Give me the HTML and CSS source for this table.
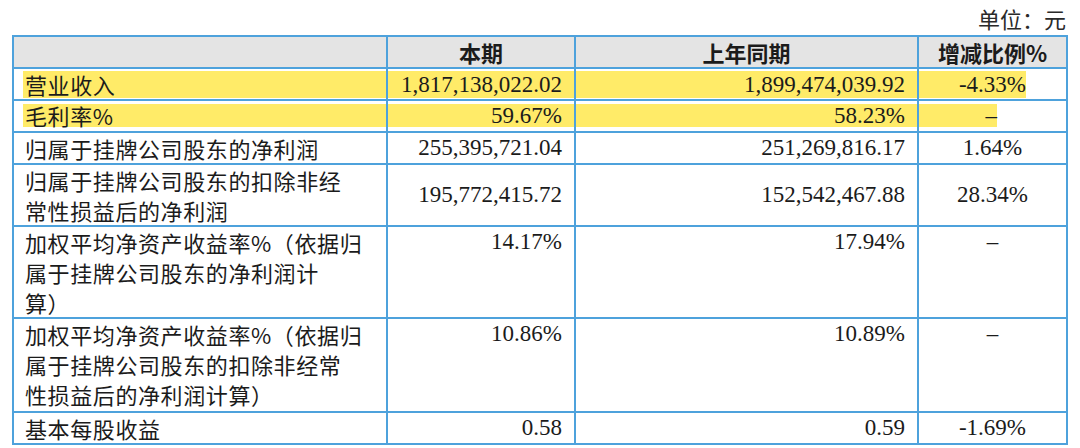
FILE: index.html
```html
<!DOCTYPE html>
<html lang="zh-CN">
<head>
<meta charset="utf-8">
<title>主要会计数据</title>
<link rel="stylesheet" href="styles.css">
</head>
<body>
<div class="unit">单位：元</div>
<table class="fin">
  <thead>
    <tr>
      <th class="c1"></th>
      <th class="c2">本期</th>
      <th class="c3">上年同期</th>
      <th class="c4">增减比例%</th>
    </tr>
  </thead>
  <tbody>
    <tr class="hl-row hl-a">
      <td class="name hl-name"><div class="hl">营业收入</div></td>
      <td class="num hl-num"><div class="hl">1,817,138,022.02</div></td>
      <td class="num hl-num"><div class="hl">1,899,474,039.92</div></td>
      <td class="pct hl-pct"><div class="hl w-a">-4.33%</div></td>
    </tr>
    <tr class="hl-row hl-b">
      <td class="name hl-name"><div class="hl">毛利率%</div></td>
      <td class="num hl-num"><div class="hl">59.67%</div></td>
      <td class="num hl-num"><div class="hl">58.23%</div></td>
      <td class="pct hl-pct"><div class="hl w-b">–</div></td>
    </tr>
    <tr>
      <td class="name">归属于挂牌公司股东的净利润</td>
      <td class="num">255,395,721.04</td>
      <td class="num">251,269,816.17</td>
      <td class="pct">1.64%</td>
    </tr>
    <tr>
      <td class="name">归属于挂牌公司股东的扣除非经<br>常性损益后的净利润</td>
      <td class="num mid">195,772,415.72</td>
      <td class="num mid">152,542,467.88</td>
      <td class="pct mid">28.34%</td>
    </tr>
    <tr>
      <td class="name">加权平均净资产收益率%（依据归<br>属于挂牌公司股东的净利润计<br>算）</td>
      <td class="num">14.17%</td>
      <td class="num">17.94%</td>
      <td class="pct">–</td>
    </tr>
    <tr class="tall">
      <td class="name">加权平均净资产收益率%（依据归<br>属于挂牌公司股东的扣除非经常<br>性损益后的净利润计算）</td>
      <td class="num">10.86%</td>
      <td class="num">10.89%</td>
      <td class="pct">–</td>
    </tr>
    <tr>
      <td class="name">基本每股收益</td>
      <td class="num">0.58</td>
      <td class="num">0.59</td>
      <td class="pct">-1.69%</td>
    </tr>
  </tbody>
</table>
</body>
</html>
```

FILE: styles.css
```css
html, body {
  margin: 0;
  padding: 0;
  background: #ffffff;
}

body {
  font-family: "Liberation Serif", "Noto Sans CJK SC", serif;
  font-size: 23px;
  color: #1b1b1b;
}

.unit {
  height: 35px;
  line-height: 36px;
  text-align: right;
  padding-right: 14px;
  font-family: "Noto Sans CJK SC", sans-serif;
  font-size: 22px;
  color: #2a2a2a;
}

.fin {
  margin-left: 12px;
  width: 1054px;
  table-layout: fixed;
  border-collapse: separate;
  border-spacing: 0;
  border-top: 2px solid #4ea2dc;
  border-left: 2px solid #4ea2dc;
}

.fin th,
.fin td {
  box-sizing: border-box;
  border-right: 2px solid #4ea2dc;
  border-bottom: 2px solid #4ea2dc;
  line-height: 30px;
  padding: 0;
  vertical-align: top;
  white-space: nowrap;
}

.fin th {
  background: #e4e4e4;
  font-family: "Noto Sans CJK SC", sans-serif;
  font-weight: 700;
  font-size: 22px;
  text-align: center;
  color: #1b1b1b;
}

.c1 { width: 374px; }
.c2 { width: 188px; }
.c3 { width: 343px; }
.c4 { width: 149px; }

.name {
  padding-left: 11px !important;
  font-family: "Noto Sans CJK SC", sans-serif;
  font-size: 22px;
  letter-spacing: 0.6px;
}

.num {
  text-align: right;
  padding-right: 12px !important;
}

.pct {
  text-align: center;
}

.mid {
  vertical-align: middle !important;
}

.tall td {
  height: 94px;
}

/* highlighted rows */
.hl {
  background: #ffeb68;
}

.hl-name {
  padding-left: 9px !important;
}

.hl-name .hl {
  padding-left: 2px;
}

.hl-num {
  padding-right: 0 !important;
}

.hl-num .hl {
  padding-right: 12px;
}

.hl-pct .hl {
  text-align: right;
}

.hl-a .hl {
  margin-top: 2px;
  line-height: 27px;
  height: 27px;
  margin-bottom: 1px;
}

.hl-b .hl {
  margin-top: 3px;
  line-height: 23px;
  height: 23px;
  margin-bottom: 4px;
}

.w-a { width: 107px; }
.w-b { width: 78px; }
```
